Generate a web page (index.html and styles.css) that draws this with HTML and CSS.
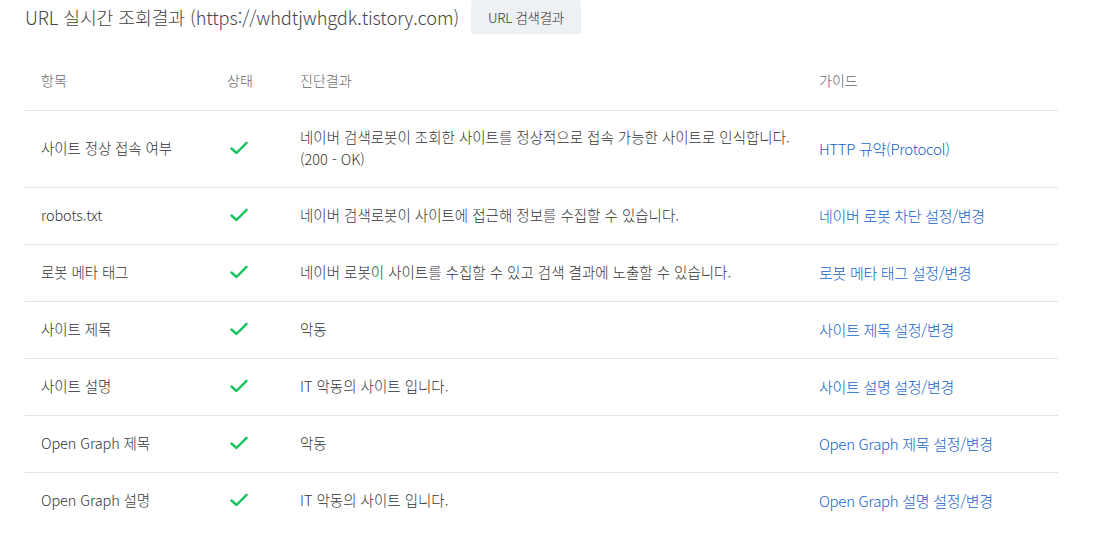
FILE: index.html
```html
<!DOCTYPE html>
<html lang="ko">
<head>
<meta charset="utf-8">
<link rel="stylesheet" href="styles.css">
</head>
<body>
<div class="page">
  <div class="head">
    <h1 class="title">URL 실시간 조회결과 (https://whdtjwhgdk.tistory.com)</h1>
    <button class="btn">URL 검색결과</button>
  </div>
  <table class="tbl">
    <colgroup>
      <col class="c1"><col class="c2"><col class="c3"><col class="c4">
    </colgroup>
    <thead>
      <tr><th>항목</th><th>상태</th><th>진단결과</th><th>가이드</th></tr>
    </thead>
    <tbody>
      <tr class="tall">
        <td class="item">사이트 정상 접속 여부</td>
        <td><svg class="chk" viewBox="0 0 18 14" width="18" height="14"><path d="M1.5 7.5 L6.5 12 L16.5 1.8"/></svg></td>
        <td class="desc">네이버 검색로봇이 조회한 사이트를 정상적으로 접속 가능한 사이트로 인식합니다.<br>(200 - OK)</td>
        <td><a class="lnk" href="#">HTTP 규약(Protocol)</a></td>
      </tr>
      <tr>
        <td class="item">robots.txt</td>
        <td><svg class="chk" viewBox="0 0 18 14" width="18" height="14"><path d="M1.5 7.5 L6.5 12 L16.5 1.8"/></svg></td>
        <td class="desc">네이버 검색로봇이 사이트에 접근해 정보를 수집할 수 있습니다.</td>
        <td><a class="lnk" href="#">네이버 로봇 차단 설정/변경</a></td>
      </tr>
      <tr>
        <td class="item">로봇 메타 태그</td>
        <td><svg class="chk" viewBox="0 0 18 14" width="18" height="14"><path d="M1.5 7.5 L6.5 12 L16.5 1.8"/></svg></td>
        <td class="desc">네이버 로봇이 사이트를 수집할 수 있고 검색 결과에 노출할 수 있습니다.</td>
        <td><a class="lnk" href="#">로봇 메타 태그 설정/변경</a></td>
      </tr>
      <tr>
        <td class="item">사이트 제목</td>
        <td><svg class="chk" viewBox="0 0 18 14" width="18" height="14"><path d="M1.5 7.5 L6.5 12 L16.5 1.8"/></svg></td>
        <td class="desc">악동</td>
        <td><a class="lnk" href="#">사이트 제목 설정/변경</a></td>
      </tr>
      <tr>
        <td class="item">사이트 설명</td>
        <td><svg class="chk" viewBox="0 0 18 14" width="18" height="14"><path d="M1.5 7.5 L6.5 12 L16.5 1.8"/></svg></td>
        <td class="desc">IT 악동의 사이트 입니다.</td>
        <td><a class="lnk" href="#">사이트 설명 설정/변경</a></td>
      </tr>
      <tr>
        <td class="item">Open Graph 제목</td>
        <td><svg class="chk" viewBox="0 0 18 14" width="18" height="14"><path d="M1.5 7.5 L6.5 12 L16.5 1.8"/></svg></td>
        <td class="desc">악동</td>
        <td><a class="lnk" href="#">Open Graph 제목 설정/변경</a></td>
      </tr>
      <tr class="last">
        <td class="item">Open Graph 설명</td>
        <td><svg class="chk" viewBox="0 0 18 14" width="18" height="14"><path d="M1.5 7.5 L6.5 12 L16.5 1.8"/></svg></td>
        <td class="desc">IT 악동의 사이트 입니다.</td>
        <td><a class="lnk" href="#">Open Graph 설명 설정/변경</a></td>
      </tr>
    </tbody>
  </table>
</div>
</body>
</html>
```

FILE: styles.css
```css
html, body {
  margin: 0;
  padding: 0;
  background: #fff;
}
body {
  font-family: "Noto Sans CJK KR", "Noto Sans", sans-serif;
  font-weight: 300;
  color: #333;
}
.page {
  padding: 0 37px 0 25px;
}
.head {
  display: flex;
  align-items: center;
  gap: 12px;
  height: 34px;
}
.title {
  margin: 0;
  font-size: 18.25px;
  font-weight: 300;
  color: #444;
  line-height: 34px;
  letter-spacing: -0.1px;
}
.btn {
  height: 34px;
  width: 110px;
  padding: 0;
  border: 0;
  border-radius: 3px;
  background: #eef1f4;
  color: #333;
  font-family: inherit;
  font-weight: 300;
  font-size: 13.5px;
  letter-spacing: -0.3px;
}
.tbl {
  width: 1033px;
  margin-top: 16px;
  border-collapse: collapse;
  table-layout: fixed;
}
.c1 { width: 186px; }
.c2 { width: 73px; }
.c3 { width: 519px; }
.c4 { width: 255px; }
.tbl th {
  height: 60px;
  padding: 0 0 0 16px;
  text-align: left;
  font-weight: 300;
  font-size: 14px;
  color: #666;
  border-bottom: 1px solid #e4e4e4;
  vertical-align: middle;
}
.tbl td {
  height: 54px;
  padding: 0 0 2px 16px;
  border-bottom: 1px solid #e4e4e4;
  vertical-align: middle;
  line-height: 22px;
}
.tbl tr.tall td {
  height: 74px;
}
.tbl tr.last td {
  border-bottom: 0;
}
.item {
  font-size: 14.5px;
  color: #333;
  letter-spacing: -0.1px;
}
.desc {
  font-size: 14.5px;
  letter-spacing: 0;
  color: #333;
}
.lnk {
  font-size: 15px;
  color: #1563c9;
  text-decoration: none;
  letter-spacing: -0.3px;
}
.chk {
  display: block;
  margin-left: 3px;
}
.chk path {
  fill: none;
  stroke: #17c35e;
  stroke-width: 2.4;
  stroke-linecap: round;
  stroke-linejoin: round;
}
```
